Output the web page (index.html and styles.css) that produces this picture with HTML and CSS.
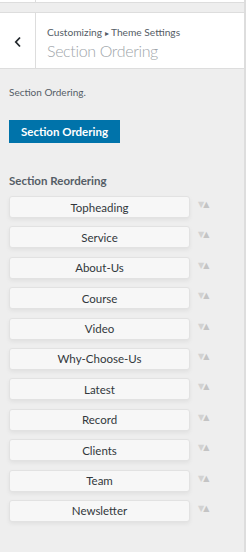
FILE: index.html
```html
<!DOCTYPE html>
<html>
<head>
<meta charset="utf-8">
<link rel="stylesheet" href="styles.css">
</head>
<body>
<div class="panel">
  <div class="prev-strip"><span class="prev-sep"></span></div>
  <div class="gap-band"></div>
  <div class="header">
    <div class="back">
      <svg width="10" height="12" viewBox="0 0 10 12"><path d="M7 1.5 L2.8 6 L7 10.5" fill="none" stroke="#23282d" stroke-width="1.8"/></svg>
    </div>
    <div class="titles">
      <div class="crumb">Customizing <span class="tri">▸</span> Theme Settings</div>
      <div class="title">Section Ordering</div>
    </div>
  </div>
  <div class="content">
    <p class="desc">Section Ordering.</p>
    <button class="primary">Section Ordering</button>
    <h3 class="label">Section Reordering</h3>
    <ul class="list">
      <li class="row"><span class="item">Topheading</span><span class="arrows"><span class="dn">▼</span><span class="up">▲</span></span></li>
      <li class="row"><span class="item">Service</span><span class="arrows"><span class="dn">▼</span><span class="up">▲</span></span></li>
      <li class="row"><span class="item">About-Us</span><span class="arrows"><span class="dn">▼</span><span class="up">▲</span></span></li>
      <li class="row"><span class="item">Course</span><span class="arrows"><span class="dn">▼</span><span class="up">▲</span></span></li>
      <li class="row"><span class="item">Video</span><span class="arrows"><span class="dn">▼</span><span class="up">▲</span></span></li>
      <li class="row"><span class="item">Why-Choose-Us</span><span class="arrows"><span class="dn">▼</span><span class="up">▲</span></span></li>
      <li class="row"><span class="item">Latest</span><span class="arrows"><span class="dn">▼</span><span class="up">▲</span></span></li>
      <li class="row"><span class="item">Record</span><span class="arrows"><span class="dn">▼</span><span class="up">▲</span></span></li>
      <li class="row"><span class="item">Clients</span><span class="arrows"><span class="dn">▼</span><span class="up">▲</span></span></li>
      <li class="row"><span class="item">Team</span><span class="arrows"><span class="dn">▼</span><span class="up">▲</span></span></li>
      <li class="row"><span class="item">Newsletter</span><span class="arrows"><span class="dn">▼</span><span class="up">▲</span></span></li>
    </ul>
  </div>
</div>
</body>
</html>
```
FILE: styles.css
```css
html, body {
  margin: 0;
  padding: 0;
  background: #eeeeee;
}
body {
  font-family: "Lato", "Noto Sans", sans-serif;
  color: #555d66;
}
.panel {
  width: 244px;
  height: 552px;
  background: #eeeeee;
  border-right: 2px solid #dddddd;
  overflow: hidden;
}
.prev-strip {
  height: 2px;
  background: #ffffff;
  border-bottom: 1px solid #dddddd;
  display: flex;
}
.prev-sep {
  width: 35px;
  border-right: 1px solid #dddddd;
}
.gap-band {
  height: 9px;
  border-bottom: 1px solid #dddddd;
}
.header {
  display: flex;
  height: 55px;
  background: #ffffff;
  border-bottom: 1px solid #dddddd;
}
.back {
  width: 35px;
  border-right: 1px solid #dddddd;
  display: flex;
  align-items: center;
  justify-content: center;
  padding-top: 2px;
}
.titles {
  padding: 12px 0 0 11px;
}
.crumb {
  font-size: 10.2px;
  line-height: 14px;
  color: #555d66;
}
.tri {
  font-size: 8px;
}
.title {
  font-size: 16px;
  font-weight: 300;
  line-height: 22px;
  letter-spacing: -0.35px;
  color: #a0a5aa;
}
.content {
  padding: 0 9px;
}
.desc {
  margin: 16px 0 0;
  font-size: 10px;
  line-height: 14px;
}
.primary {
  margin-top: 21px;
  width: 111px;
  height: 23px;
  padding: 0;
  border: none;
  background: #0073aa;
  color: #ffffff;
  font-family: inherit;
  font-weight: 700;
  font-size: 11.5px;
  display: block;
}
.label {
  margin: 31px 0 8px;
  font-size: 11.5px;
  font-weight: 700;
  line-height: 14px;
  color: #555d66;
}
.list {
  list-style: none;
  margin: 0;
  padding: 0;
  display: flex;
  flex-direction: column;
  gap: 8.4px;
}
.row {
  display: flex;
  align-items: center;
}
.item {
  width: 179px;
  height: 20px;
  border: 1px solid #e2e2e2;
  border-radius: 3px;
  background: #f7f7f7;
  box-shadow: 0 2px 4px rgba(0,0,0,0.06);
  display: flex;
  align-items: center;
  justify-content: center;
  font-size: 11.5px;
  color: #32373c;
}
.arrows {
  margin-left: 8px;
  margin-top: -4px;
  display: flex;
  font-family: "DejaVu Sans", sans-serif;
  font-size: 8px;
  line-height: 1;
}
.dn { color: #d2d2d2; margin-right: -1px; }
.up { color: #c4c4c4; }
```
